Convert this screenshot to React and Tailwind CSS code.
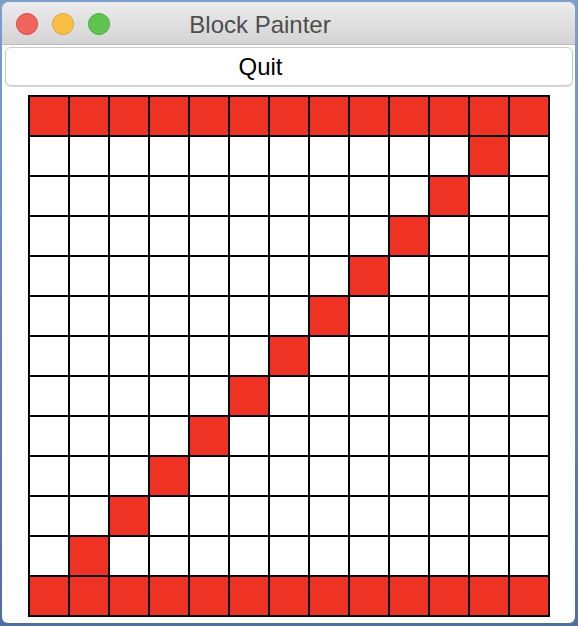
import React from 'react';

const SIZE = 13;

const isRed = (r, c) => {
  if (r === 0 || r === SIZE - 1) return true;
  return c === SIZE - 1 - r;
};

const App = () => {
  const cells = [];
  for (let r = 0; r < SIZE; r++) {
    for (let c = 0; c < SIZE; c++) {
      cells.push(
        <div
          key={r + '-' + c}
          className={isRed(r, c) ? 'w-[38px] h-[38px] bg-[#ee3224]' : 'w-[38px] h-[38px] bg-white'}
        />
      );
    }
  }

  return (
    <div
      className="w-[578px] h-[626px] bg-gradient-to-b from-[#7d9fcb] to-[#4f6f9c] pt-[2px] pl-[2px] overflow-hidden"
      style={{ fontFamily: '"Liberation Sans", Arial, sans-serif' }}
    >
      <div className="w-[573px] h-[621px] bg-white rounded-t-[7px] rounded-b-[6px] overflow-hidden flex flex-col">
        <div className="relative h-[43px] shrink-0 bg-gradient-to-b from-[#ebebeb] to-[#d4d4d4] border-b border-[#bdbdbd] flex items-center pt-[2px]">
          <div className="flex items-center gap-[14px] pl-[14px]">
            <div className="w-[22px] h-[22px] rounded-full bg-[#f2655c] border border-[#e0443e]" />
            <div className="w-[22px] h-[22px] rounded-full bg-[#fbbe45] border border-[#dea236]" />
            <div className="w-[22px] h-[22px] rounded-full bg-[#5ec44f] border border-[#4cac3c]" />
          </div>
          <div className="absolute inset-0 flex items-center justify-center pt-[4px] pr-[57px] text-[24px] text-[#4d4d4d]">
            Block Painter
          </div>
        </div>
        <div className="px-[3px] pt-[2px]">
          <button className="w-[568px] h-[39px] bg-white border border-[#c9c9c9] rounded-[6px] shadow-[0_1px_1px_rgba(0,0,0,0.15)] text-[24px] text-black flex items-center justify-center pr-[57px]">
            Quit
          </button>
        </div>
        <div className="pl-[26px] pt-[9px]">
          <div className="inline-grid grid-cols-[repeat(13,38px)] gap-[2px] p-[2px] bg-black">
            {cells}
          </div>
        </div>
      </div>
    </div>
  );
};

export default App;
